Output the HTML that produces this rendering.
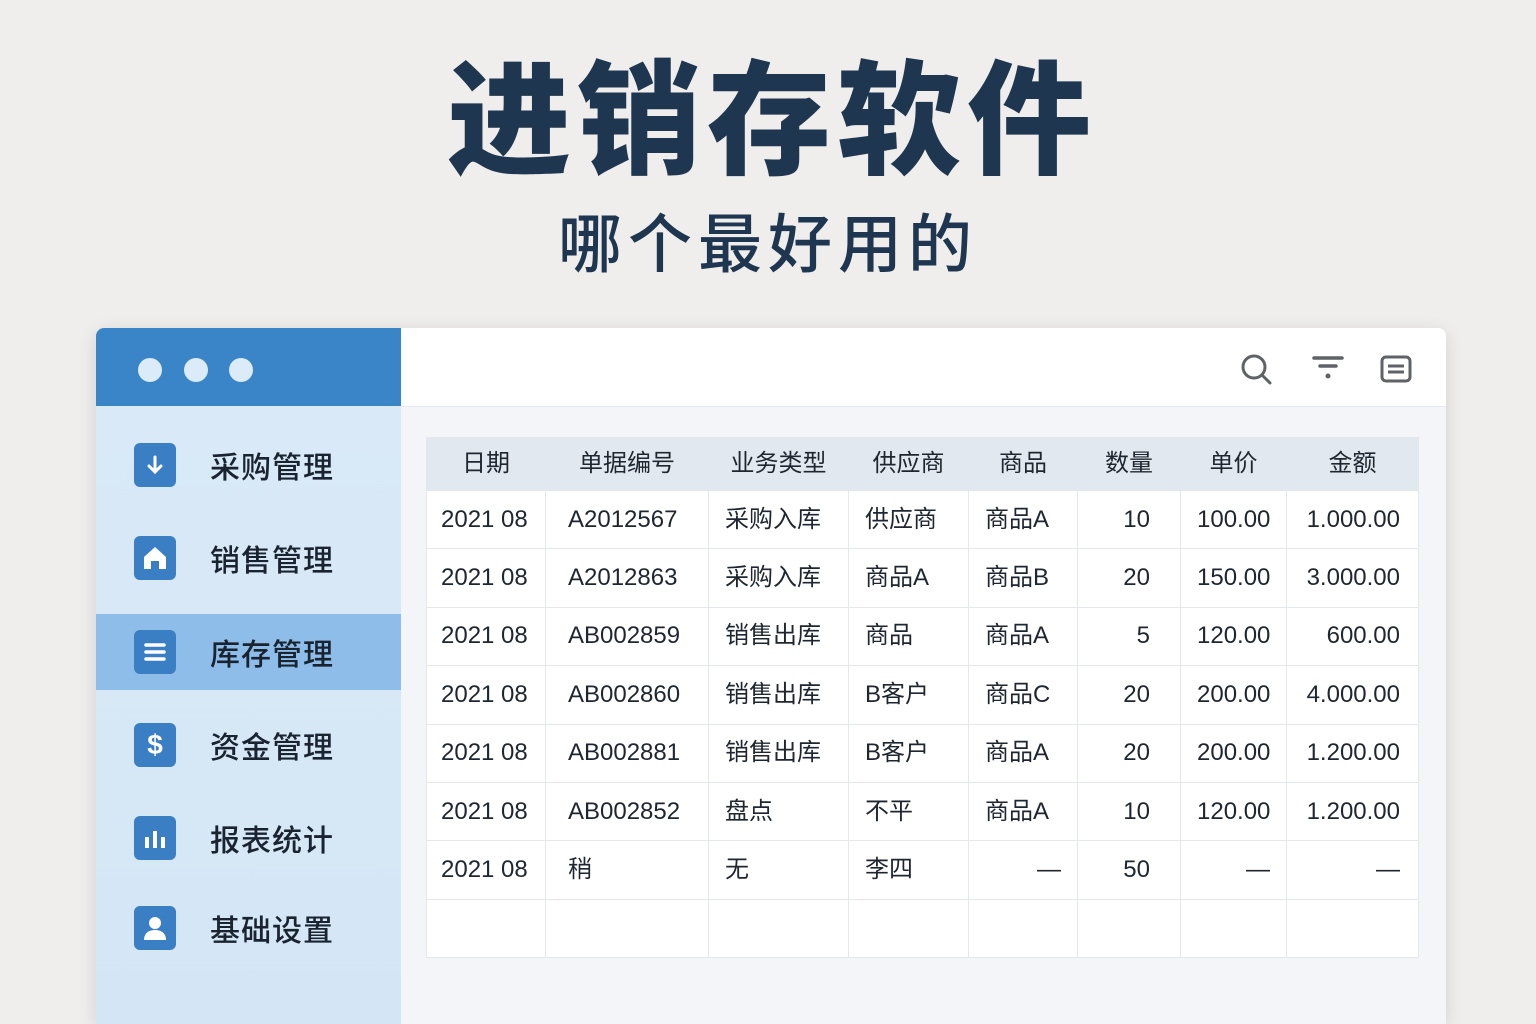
<!DOCTYPE html>
<html><head><meta charset="utf-8"><style>
*{margin:0;padding:0;box-sizing:border-box}
body{width:1536px;height:1024px;overflow:hidden;background:#efeeec;font-family:"Liberation Sans","Noto Sans CJK SC",sans-serif;position:relative}
.t1{position:absolute;left:0;width:1536px;top:52px;text-align:center;font-size:124px;font-weight:900;color:#1f3650;letter-spacing:6px;line-height:140px;padding-left:8px}
.t2{position:absolute;left:0;width:1536px;top:205px;text-align:center;font-size:64px;font-weight:500;color:#1f3650;letter-spacing:6px;line-height:80px}
.win{position:absolute;left:96px;top:328px;width:1350px;height:696px;border-radius:8px 8px 0 0;overflow:hidden;background:#f3f5f8;box-shadow:0 4px 18px rgba(0,0,0,.12)}
.sbh{position:absolute;left:0;top:0;width:305px;height:78px;background:#3a85c8}
.dot{position:absolute;top:30px;width:24px;height:24px;border-radius:50%;background:#dcebf8}
.sb{position:absolute;left:0;top:78px;width:305px;height:640px;background:linear-gradient(#d9e9f7,#d4e6f6)}
.mh{position:absolute;left:305px;top:0;right:0;height:79px;background:#fff;border-bottom:1px solid #e5e8ec}
.item{position:absolute;left:0;width:305px;height:76px;display:flex;align-items:center}
.item.act{background:#8dbde8}
.ic{position:absolute;left:38px;width:42px;height:44px;border-radius:6px;background:#3a7fc4;display:flex;align-items:center;justify-content:center}
.lbl{position:absolute;left:114px;font-size:30px;font-weight:500;color:#1a2330;letter-spacing:1px}
table{position:absolute;left:330px;top:109px;width:992px;table-layout:fixed;border-collapse:collapse;background:#fff;font-size:24px;color:#1e2630}
td,th{border:1px solid #e4e7eb;height:58.4px;font-weight:400;padding:0 16px;vertical-align:middle;line-height:30px;white-space:nowrap;overflow:hidden}
td:first-child{padding-left:14px;padding-right:0}
td:nth-child(2){padding-left:22px}
td:last-child{padding-right:18px}
th{background:#e2e8ef;height:53px;text-align:center;font-size:24px;padding:0}
</style></head><body>
<div class="t1">进销存软件</div>
<div class="t2">哪个最好用的</div>
<div class="win">
<div class="sbh"><div class="dot" style="left:42px"></div><div class="dot" style="left:88px"></div><div class="dot" style="left:133px"></div></div>
<div class="sb">
<div class="item" style="top:21px"><div class="ic"><svg width="24" height="24" viewBox="0 0 24 24"><path d="M12 4v15M6 13l6 6 6-6" stroke="#fff" stroke-width="3" fill="none" stroke-linecap="round"/></svg></div><div class="lbl">采购管理</div></div>
<div class="item" style="top:114px"><div class="ic"><svg width="28" height="28" viewBox="0 0 28 28"><path d="M3 13L14 3l11 10v12h-7v-8h-8v8H3z" fill="#fff"/></svg></div><div class="lbl">销售管理</div></div>
<div class="item act" style="top:208px"><div class="ic"><svg width="26" height="24" viewBox="0 0 26 24"><path d="M4 5h18M4 12h18M4 19h18" stroke="#fff" stroke-width="3.5" stroke-linecap="round"/></svg></div><div class="lbl">库存管理</div></div>
<div class="item" style="top:301px"><div class="ic" style="color:#fff;font-size:28px;font-weight:700">$</div><div class="lbl">资金管理</div></div>
<div class="item" style="top:394px"><div class="ic"><svg width="26" height="22" viewBox="0 0 26 22"><path d="M5 10v11M13 4v17M21 10v11" stroke="#fff" stroke-width="4"/></svg></div><div class="lbl">报表统计</div></div>
<div class="item" style="top:484px"><div class="ic"><svg width="28" height="28" viewBox="0 0 28 28"><circle cx="14" cy="9" r="6" fill="#fff"/><path d="M3 26c0-7 5-10 11-10s11 3 11 10z" fill="#fff"/></svg></div><div class="lbl">基础设置</div></div>
</div>
<div class="mh">
<svg style="position:absolute;left:838px;top:24px" width="36" height="36" viewBox="0 0 36 36"><circle cx="15" cy="15" r="11" stroke="#5f6266" stroke-width="3" fill="none"/><path d="M23 23l8 8" stroke="#5f6266" stroke-width="3" stroke-linecap="round"/></svg>
<svg style="position:absolute;left:910px;top:26px" width="34" height="30" viewBox="0 0 34 30"><path d="M3 4h28M9 12h16" stroke="#5f6266" stroke-width="3.5" stroke-linecap="round"/><circle cx="17" cy="22" r="2.5" fill="#5f6266"/></svg>
<svg style="position:absolute;left:978px;top:25px" width="34" height="32" viewBox="0 0 34 32"><rect x="3" y="4" width="28" height="24" rx="4" stroke="#5f6266" stroke-width="3" fill="none"/><path d="M9 13h16M9 19h16" stroke="#5f6266" stroke-width="3"/></svg>
</div>
<table>
<colgroup><col style="width:119px"><col style="width:163px"><col style="width:140px"><col style="width:120px"><col style="width:109px"><col style="width:103px"><col style="width:106px"><col style="width:132px"></colgroup>
<tr><th>日期</th><th>单据编号</th><th>业务类型</th><th>供应商</th><th>商品</th><th>数量</th><th>单价</th><th>金额</th></tr>
<tr><td>2021 08</td><td>A2012567</td><td>采购入库</td><td>供应商</td><td>商品A</td><td style="text-align:right;padding-right:30px">10</td><td style="text-align:right">100.00</td><td style="text-align:right">1.000.00</td></tr>
<tr><td>2021 08</td><td>A2012863</td><td>采购入库</td><td>商品A</td><td>商品B</td><td style="text-align:right;padding-right:30px">20</td><td style="text-align:right">150.00</td><td style="text-align:right">3.000.00</td></tr>
<tr><td>2021 08</td><td>AB002859</td><td>销售出库</td><td>商品</td><td>商品A</td><td style="text-align:right;padding-right:30px">5</td><td style="text-align:right">120.00</td><td style="text-align:right">600.00</td></tr>
<tr><td>2021 08</td><td>AB002860</td><td>销售出库</td><td>B客户</td><td>商品C</td><td style="text-align:right;padding-right:30px">20</td><td style="text-align:right">200.00</td><td style="text-align:right">4.000.00</td></tr>
<tr><td>2021 08</td><td>AB002881</td><td>销售出库</td><td>B客户</td><td>商品A</td><td style="text-align:right;padding-right:30px">20</td><td style="text-align:right">200.00</td><td style="text-align:right">1.200.00</td></tr>
<tr><td>2021 08</td><td>AB002852</td><td>盘点</td><td>不平</td><td>商品A</td><td style="text-align:right;padding-right:30px">10</td><td style="text-align:right">120.00</td><td style="text-align:right">1.200.00</td></tr>
<tr><td>2021 08</td><td>稍</td><td>无</td><td>李四</td><td style="text-align:right">—</td><td style="text-align:right;padding-right:30px">50</td><td style="text-align:right">—</td><td style="text-align:right">—</td></tr>
<tr><td></td><td></td><td></td><td></td><td></td><td></td><td></td><td></td></tr>
</table>
</div>
</body></html>
